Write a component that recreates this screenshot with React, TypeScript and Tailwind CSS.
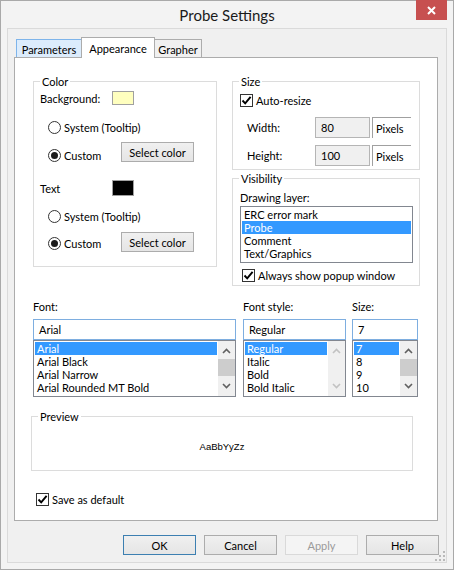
import React from 'react';

type Kids = { children?: React.ReactNode; className?: string };

function Radio({ checked }: { checked?: boolean }) {
  return (
    <span className="flex h-[13px] w-[13px] shrink-0 items-center justify-center rounded-full border border-[#333] bg-white">
      {checked && <span className="h-[7px] w-[7px] rounded-full bg-[#1b1b1b]" />}
    </span>
  );
}

function Check() {
  return (
    <span className="flex h-[13px] w-[13px] shrink-0 items-center justify-center border border-[#333] bg-white">
      <svg width="11" height="11" viewBox="0 0 11 11">
        <path d="M1.5 5.5 L4.2 8.4 L9.6 1.8" fill="none" stroke="#000" strokeWidth="1.9" />
      </svg>
    </span>
  );
}

function Button({ children, className = '', primary, disabled }: Kids & { primary?: boolean; disabled?: boolean }) {
  const look = disabled
    ? 'border-[#d9d9d9] bg-[#f4f4f4] text-[#9a9a9a]'
    : primary
      ? 'border-[#3c7fb1] bg-gradient-to-b from-[#f0f0f0] to-[#e5e5e5]'
      : 'border-[#acacac] bg-gradient-to-b from-[#f0f0f0] to-[#e5e5e5]';
  return <div className={`flex h-[20px] items-center justify-center border ${look} ${className}`}>{children}</div>;
}

function Group({ title, className = '', children }: Kids & { title: string }) {
  return (
    <fieldset className={`border border-[#dcdcdc] ${className}`}>
      <legend className="ml-[6px] px-[2px] leading-[15px]">{title}</legend>
      {children}
    </fieldset>
  );
}

function Arrow({ up, color }: { up?: boolean; color: string }) {
  return (
    <svg width="9" height="6" viewBox="0 0 9 6">
      <path d={up ? 'M1 5 L4.5 1.5 L8 5' : 'M1 1 L4.5 4.5 L8 1'} fill="none" stroke={color} strokeWidth="1.6" />
    </svg>
  );
}

function ScrollBar({ enabled }: { enabled: boolean }) {
  const c = enabled ? '#606060' : '#c2c2c2';
  return (
    <div className="flex w-[17px] shrink-0 flex-col bg-[#f0f0f0]">
      <div className="flex h-[18px] items-center justify-center pt-[2px]">
        <Arrow up color={c} />
      </div>
      <div className={`h-[17px] ${enabled ? 'bg-[#cdcdcd]' : ''}`} />
      <div className="flex flex-1 items-center justify-center">
        <Arrow color={c} />
      </div>
    </div>
  );
}

function ListBox({ items, selected, scroll, className = '' }: { items: string[]; selected: number; scroll?: 'on' | 'off'; className?: string }) {
  return (
    <div className={`flex overflow-hidden border border-[#828790] bg-white ${className}`}>
      <div className="min-w-0 flex-1 p-[1px]">
        {items.map((t, i) => (
          <div
            key={t}
            className={`h-[13px] overflow-hidden whitespace-nowrap pl-[2px] leading-[13px] ${i === selected ? 'bg-[#3399ff] text-white' : ''}`}
          >
            {t}
          </div>
        ))}
      </div>
      {scroll && <ScrollBar enabled={scroll === 'on'} />}
    </div>
  );
}

function Edit({ value, className = '' }: { value: string; className?: string }) {
  return (
    <div className={`flex h-[21px] items-center border border-[#7eaee0] bg-white pl-[5px] ${className}`}>{value}</div>
  );
}

function SizeRow({ label, value, className = '' }: { label: string; value: string; className?: string }) {
  return (
    <div className={`flex h-[21px] items-center pl-[14px] ${className}`}>
      <span className="w-[68px]">{label}</span>
      <div className="flex h-[21px] w-[55px] items-center border border-[#b5b5b5] bg-[#f0f0f0] pl-[5px]">{value}</div>
      <div className="ml-[2px] flex h-[21px] w-[39px] items-center border-l border-t border-[#a0a0a0] pl-[3px]">Pixels</div>
    </div>
  );
}

function ColorChoice({ label, swatch, swatchH, className = '' }: { label: string; swatch: string; swatchH: string; className?: string }) {
  return (
    <div className={className}>
      <div className="flex h-[18px] items-center pl-[6px]">
        <span className="w-[72px]">{label}</span>
        <span className={`w-[22px] border border-[#a0a0a0] ${swatch} ${swatchH}`} />
      </div>
    </div>
  );
}

export default function App() {
  return (
    <div className="flex h-[570px] w-[454px] flex-col border border-[#a9a9a9] bg-[#f3f3f3] font-['Lato',sans-serif] text-[11px] leading-[15px] text-black">
      {/* title bar */}
      <div className="grid h-[27px] shrink-0 grid-cols-[1fr_auto_1fr] items-center">
        <div />
        <div className="text-[15px] leading-[18px] text-[#1a1a1a]">Probe Settings</div>
        <div className="flex h-full justify-end self-start">
          <div className="-mt-px mr-[6px] flex h-[20px] w-[31px] items-center justify-center bg-[#c75050]">
            <svg width="9" height="9" viewBox="0 0 9 9">
              <path d="M1 1 L8 8 M8 1 L1 8" stroke="#fff" strokeWidth="2" />
            </svg>
          </div>
        </div>
      </div>

      {/* client area */}
      <div className="relative mx-[6px] h-[535px] border border-[#dadada] bg-[#f0f0f0]">
        {/* tabs */}
        <div className="ml-[8px] mt-[7px] flex h-[21px] items-end">
          <div className="flex h-[18px] w-[66px] items-center justify-center border border-b-0 border-[#7eb4ea] bg-[#dcecfc] pt-[2px]">
            Parameters
          </div>
          <div className="relative z-10 -mb-px -ml-px flex h-[21px] w-[74px] items-center justify-center border border-b-0 border-[#acacac] bg-white">
            Appearance
          </div>
          <div className="-ml-px flex h-[18px] w-[48px] items-center justify-center border border-b-0 border-[#acacac] bg-[#f0f0f0] pt-[2px]">
            Grapher
          </div>
        </div>

        {/* tab panel */}
        <div className="ml-[6px] h-[464px] w-[424px] border border-[#acacac] bg-white">
          <div className="ml-[18px] mt-[16px] flex items-start gap-[15px]">
            <Group title="Color" className="h-[193px] w-[184px]">
              <ColorChoice label="Background:" swatch="bg-[#ffffbf]" swatchH="h-[14px]" />
              <div className="mt-[10px] flex h-[20px] items-center gap-[3px] pl-[14px]">
                <Radio />
                <span>System (Tooltip)</span>
              </div>
              <div className="mt-[5px] flex h-[20px] items-start">
                <div className="mt-[6px] flex h-[14px] w-[87px] items-center gap-[3px] pl-[14px]">
                  <Radio checked />
                  <span>Custom</span>
                </div>
                <Button className="w-[73px]">Select color</Button>
              </div>
              <ColorChoice label="Text" swatch="bg-black" swatchH="h-[16px]" className="mt-[17px]" />
              <div className="mt-[9px] flex h-[20px] items-center gap-[3px] pl-[14px]">
                <Radio />
                <span>System (Tooltip)</span>
              </div>
              <div className="mt-[6px] flex h-[20px] items-start">
                <div className="mt-[4px] flex h-[14px] w-[87px] items-center gap-[3px] pl-[14px]">
                  <Radio checked />
                  <span>Custom</span>
                </div>
                <Button className="w-[73px]">Select color</Button>
              </div>
            </Group>

            <div className="flex w-[188px] flex-col">
              <Group title="Size" className="h-[96px]">
                <div className="mt-[4px] flex h-[14px] items-center gap-[3px] pl-[7px]">
                  <Check />
                  <span>Auto-resize</span>
                </div>
                <SizeRow label="Width:" value="80" className="mt-[10px]" />
                <SizeRow label="Height:" value="100" className="mt-[7px]" />
              </Group>
              <Group title="Visibility" className="mt-[1px] h-[115px]">
                <div className="mt-[3px] flex h-[16px] items-center pl-[7px]">Drawing layer:</div>
                <ListBox
                  items={['ERC error mark', 'Probe', 'Comment', 'Text/Graphics']}
                  selected={1}
                  className="ml-[7px] mt-[1px] h-[57px] w-[173px]"
                />
                <div className="mt-[6px] flex h-[13px] items-center gap-[3px] pl-[9px]">
                  <Check />
                  <span>Always show popup window</span>
                </div>
              </Group>
            </div>
          </div>

          {/* font pickers */}
          <div className="ml-[18px] mt-[13px] grid grid-cols-[203px_103px_65px] gap-x-[7px]">
            <div className="h-[15px]">Font:</div>
            <div className="h-[15px]">Font style:</div>
            <div className="-ml-px h-[15px]">Size:</div>
            <Edit value="Arial" className="mt-[5px]" />
            <Edit value="Regular" className="mt-[5px]" />
            <Edit value="7" className="-ml-px mt-[5px]" />
            <ListBox
              items={['Arial', 'Arial Black', 'Arial Narrow', 'Arial Rounded MT Bold']}
              selected={0}
              scroll="on"
              className="h-[57px]"
            />
            <ListBox items={['Regular', 'Italic', 'Bold', 'Bold Italic']} selected={0} scroll="off" className="h-[57px]" />
            <ListBox items={['7', '8', '9', '10']} selected={0} scroll="on" className="-ml-px h-[57px]" />
          </div>

          <Group title="Preview" className="ml-[16px] mt-[12px] h-[62px] w-[382px]">
            <div className="flex h-[44px] items-center justify-center font-['Liberation_Sans',sans-serif] text-[9.5px]">
              AaBbYyZz
            </div>
          </Group>

          <div className="ml-[21px] mt-[21px] flex h-[14px] items-center gap-[3px]">
            <Check />
            <span>Save as default</span>
          </div>
        </div>

        {/* dialog buttons */}
        <div className="mt-[14px] flex justify-end gap-[8px] pr-[7px]">
          <Button primary className="w-[73px]">OK</Button>
          <Button className="w-[73px]">Cancel</Button>
          <Button disabled className="w-[73px]">Apply</Button>
          <Button className="w-[73px]">Help</Button>
        </div>

        {/* size grip */}
        <svg className="absolute bottom-[1px] right-[1px]" width="10" height="10" viewBox="0 0 10 10">
          <g fill="#b9b9b9">
            <rect x="8" y="0" width="2" height="2" />
            <rect x="4" y="4" width="2" height="2" />
            <rect x="8" y="4" width="2" height="2" />
            <rect x="0" y="8" width="2" height="2" />
            <rect x="4" y="8" width="2" height="2" />
            <rect x="8" y="8" width="2" height="2" />
          </g>
        </svg>
      </div>
    </div>
  );
}
